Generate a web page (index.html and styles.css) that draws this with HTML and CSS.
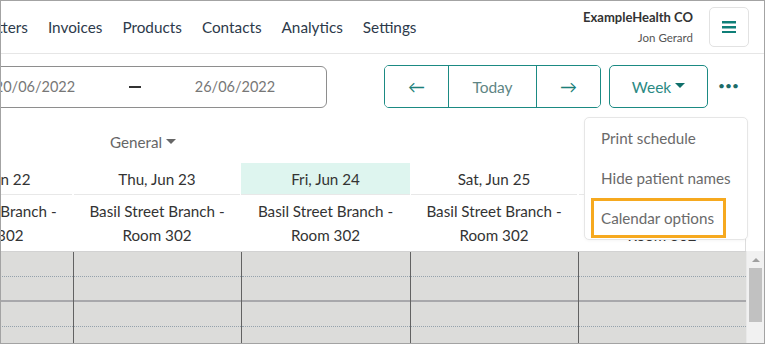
FILE: index.html
```html
<!DOCTYPE html>
<html>
<head>
<meta charset="utf-8">
<link rel="stylesheet" href="styles.css">
</head>
<body>
<div class="frame">
  <header class="header">
    <nav class="nav">
      <a class="nav-item first">Letters</a>
      <a class="nav-item">Invoices</a>
      <a class="nav-item">Products</a>
      <a class="nav-item">Contacts</a>
      <a class="nav-item">Analytics</a>
      <a class="nav-item">Settings</a>
    </nav>
    <div class="account">
      <div class="org">ExampleHealth CO</div>
      <div class="user">Jon Gerard</div>
    </div>
    <button class="menu-btn" aria-label="Menu">
      <svg width="14" height="12" viewBox="0 0 14 12"><rect x="0" y="0" width="14" height="2.5" fill="#0f7f78"/><rect x="0" y="5" width="14" height="2.5" fill="#0f7f78"/><rect x="0" y="10" width="14" height="2.5" fill="#0f7f78"/></svg>
    </button>
  </header>

  <div class="toolbar">
    <div class="date-range">
      <span class="date">20/06/2022</span>
      <span class="dash"></span>
      <span class="date">26/06/2022</span>
    </div>
    <div class="btn-group">
      <button class="seg seg-arrow">←</button>
      <button class="seg seg-today">Today</button>
      <button class="seg seg-arrow">→</button>
    </div>
    <button class="week-btn">Week <span class="caret teal"></span></button>
    <div class="more">•••</div>
  </div>

  <div class="group-row">
    <span class="group">General <span class="caret grey"></span></span>
  </div>

  <div class="calendar">
    <div class="cal-head">
      <div class="day">Wed, Jun 22</div>
      <div class="day">Thu, Jun 23</div>
      <div class="day today">Fri, Jun 24</div>
      <div class="day">Sat, Jun 25</div>
      <div class="day">Sun, Jun 26</div>
      <div class="gutter"></div>
    </div>
    <div class="cal-rooms">
      <div class="room">Basil Street Branch -<br>Room 302</div>
      <div class="room">Basil Street Branch -<br>Room 302</div>
      <div class="room">Basil Street Branch -<br>Room 302</div>
      <div class="room">Basil Street Branch -<br>Room 302</div>
      <div class="room">Basil Street Branch -<br>Room 302</div>
      <div class="gutter"></div>
    </div>
    <div class="cal-body">
      <div class="slots">
        <div class="col"><div class="slot half"></div><div class="slot hour"></div><div class="slot half"></div><div class="slot"></div></div>
        <div class="col"><div class="slot half"></div><div class="slot hour"></div><div class="slot half"></div><div class="slot"></div></div>
        <div class="col"><div class="slot half"></div><div class="slot hour"></div><div class="slot half"></div><div class="slot"></div></div>
        <div class="col"><div class="slot half"></div><div class="slot hour"></div><div class="slot half"></div><div class="slot"></div></div>
        <div class="col"><div class="slot half"></div><div class="slot hour"></div><div class="slot half"></div><div class="slot"></div></div>
      </div>
      <div class="scrollbar">
        <div class="sb-arrow"></div>
        <div class="sb-thumb"></div>
      </div>
    </div>
  </div>

  <div class="dropdown">
    <div class="dd-item">Print schedule</div>
    <div class="dd-item">Hide patient names</div>
    <div class="dd-item focused">Calendar options</div>
  </div>
</div>
</body>
</html>
```

FILE: styles.css
```css
* { box-sizing: border-box; }
html, body { margin: 0; padding: 0; background: #fff; }
body { font-family: "Lato", "Noto Sans", sans-serif; }

.frame {
  position: relative;
  width: 765px;
  height: 344px;
  border: 1px solid #a3a3a3;
  overflow: hidden;
  background: #fff;
}

/* header */
.header {
  display: flex;
  align-items: center;
  height: 53px;
  border-bottom: 1px solid #e6e6e6;
  padding-right: 15px;
}
.nav { display: flex; gap: 20px; flex: 1; margin-left: -19px; }
.nav-item { font-size: 15.3px; color: #2d3a4b; white-space: nowrap; }
.account { text-align: right; margin-right: 16px; margin-top: 1px; }
.org { font-size: 13px; font-weight: 700; color: #333; line-height: 16px; }
.user { font-size: 11.5px; color: #555; line-height: 16px; margin-top: 5px; }
.menu-btn {
  width: 40px; height: 40px;
  border: 1px solid #e2e2e2; border-radius: 5px;
  background: #fff;
  display: flex; align-items: center; justify-content: center;
  padding: 0;
}

/* toolbar */
.toolbar {
  display: flex;
  align-items: center;
  margin-top: 11px;
  height: 43px;
}
.date-range {
  margin-left: -49px;
  width: 375px;
  height: 42px;
  border: 1px solid #8e8e8e;
  border-radius: 6px;
  padding-left: 32px;
  display: grid;
  grid-template-columns: 100px 100px 100px;
  align-items: center;
  justify-items: center;
  font-size: 14.5px;
  color: #777;
}
.dash { display: block; width: 12px; height: 2px; background: #333; }
.btn-group {
  display: flex;
  margin-left: 57px;
  height: 43px;
  border: 1px solid #1b8a83;
  border-radius: 5px;
  overflow: hidden;
}
.seg {
  background: #fff; border: none; padding: 0;
  font-family: inherit; font-size: 15.5px;
  display: flex; align-items: center; justify-content: center;
}
.seg-arrow { width: 63px; color: #1b7f79; font-size: 17px; }
.seg-today { width: 89px; color: #5e8584; border-left: 1px solid #1b8a83; border-right: 1px solid #1b8a83; }
.week-btn {
  margin-left: 8px;
  width: 99px; height: 43px;
  border: 1px solid #1b8a83; border-radius: 5px;
  background: #fff;
  font-family: inherit; font-size: 15.5px; color: #2b8a84;
  display: flex; align-items: center; justify-content: center; gap: 4px;
  padding: 0;
}
.caret {
  display: inline-block;
  width: 0; height: 0;
  border-left: 5px solid transparent;
  border-right: 5px solid transparent;
  border-top: 5px solid #0f6f6a;
  margin-top: -3px;
}
.caret.grey { border-top-color: #666; }
.more {
  margin-left: 10px;
  font-size: 12px; color: #1d6c68;
  margin-top: -2px;
}

/* group */
.group-row { height: 55px; display: flex; align-items: center; padding-left: 109px; padding-top: 13px; }
.group { font-size: 15.2px; color: #666; display: inline-flex; align-items: center; gap: 4px; }
.group .caret { margin-top: -2px; }

/* calendar */
.calendar { margin-left: -96px; }
.cal-head, .cal-rooms {
  display: grid;
  grid-template-columns: 168px 168px 169px 168px 168px 18px;
}
.day {
  height: 32px;
  display: flex; align-items: center; justify-content: center;
  font-size: 15.2px; color: #333;
  border-bottom: 1px solid #e8e8e8;
  margin: 0 1px;
}
.day.today { background: #def5ef; margin: 0; padding: 0 1px; }
.cal-head .gutter, .cal-rooms .gutter { border-left: 1px solid #ddd; margin-left: -1px; }
.room {
  height: 56px;
  text-align: center;
  font-size: 15.2px; line-height: 24px; color: #333;
  padding-top: 4px;
}
.cal-body { display: flex; height: 92px; }
.slots {
  display: grid;
  grid-template-columns: 168px 168px 169px 168px 168px;
  background: #dcdcda;
  border-top: 1px solid #d2d2d2;
}
.col + .col { border-left: 1px solid #626262; }
.slot { height: 25px; }
.slot.half { border-bottom: 1px dotted #95a2ac; }
.slot.hour { border-bottom: 2px solid #a8a8ab; }
.scrollbar {
  width: 18px;
  background: #f1f1f1;
  position: relative;
  padding-top: 7px;
  border-left: 1px solid #e9e9e9;
}
.sb-arrow {
  width: 0; height: 0; margin: 0 auto;
  border-left: 4px solid transparent;
  border-right: 4px solid transparent;
  border-bottom: 4px solid #a0a0a0;
}
.sb-thumb { width: 13px; height: 54px; background: #c1c1c1; margin: 6px 0 0 2px; }

/* dropdown */
.dropdown {
  position: absolute;
  left: 583px; top: 116px;
  width: 164px;
  background: #fff;
  border: 1px solid #e6e6e6;
  border-radius: 5px;
  padding: 0 0 1px 6px;
  box-shadow: 0 1px 3px rgba(0,0,0,0.04);
}
.dd-item {
  height: 40px;
  display: flex; align-items: center;
  padding-left: 10px;
  font-size: 15.2px; color: #6a6a6a;
  width: 135px;
  white-space: nowrap;
}
.dd-item.focused { outline: 3px solid #f6a91f; outline-offset: -3px; height: 40px; }
```
